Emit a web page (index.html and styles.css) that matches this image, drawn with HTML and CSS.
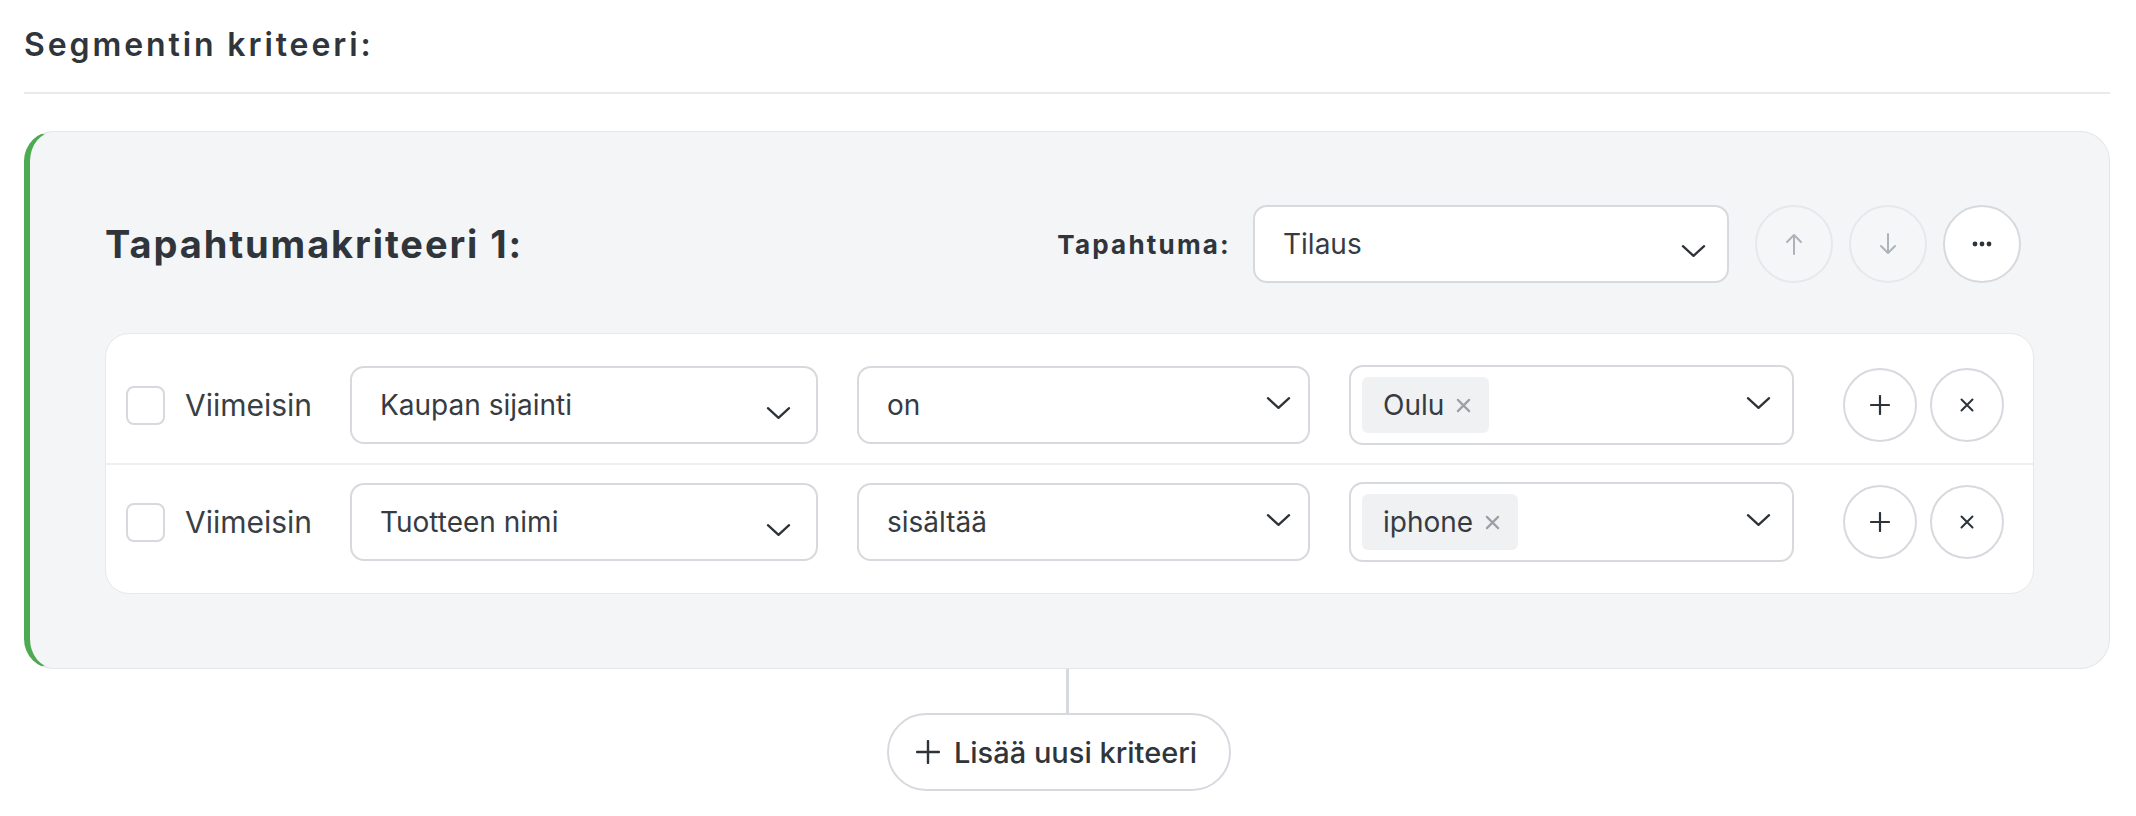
FILE: index.html
```html
<!DOCTYPE html>
<html lang="fi">
<head>
<meta charset="utf-8">
<title>Segmentin kriteeri</title>
<link rel="stylesheet" href="styles.css">
</head>
<body>
<div class="page">
  <h2 class="page-title">Segmentin kriteeri:</h2>

  <section class="card">
    <div class="card-head">
      <h3 class="card-title">Tapahtumakriteeri 1:</h3>
      <div class="head-controls">
        <span class="event-label">Tapahtuma:</span>
        <div class="select select-event">
          <span class="select-text">Tilaus</span>
          <svg class="chev" viewBox="0 0 26 14"><path d="M2 2 L13 12 L24 2"/></svg>
        </div>
        <button class="round round-disabled" aria-label="Ylös">
          <svg class="arrow" viewBox="0 0 18 24"><path d="M9 22 V3 M2 10 L9 3 L16 10"/></svg>
        </button>
        <button class="round round-disabled" aria-label="Alas">
          <svg class="arrow" viewBox="0 0 18 24"><path d="M9 2 V21 M2 14 L9 21 L16 14"/></svg>
        </button>
        <button class="round round-more" aria-label="Lisää">
          <svg class="dots" viewBox="0 0 20 6"><circle cx="3" cy="3" r="2.4"/><circle cx="10" cy="3" r="2.4"/><circle cx="17" cy="3" r="2.4"/></svg>
        </button>
      </div>
    </div>

    <div class="rules">
      <div class="rule">
        <label class="latest"><span class="check"></span><span class="latest-text">Viimeisin</span></label>
        <div class="select select-field">
          <span class="select-text">Kaupan sijainti</span>
          <svg class="chev chev-low" viewBox="0 0 26 14"><path d="M2 2 L13 12 L24 2"/></svg>
        </div>
        <div class="select select-op">
          <span class="select-text">on</span>
          <svg class="chev chev-high" viewBox="0 0 26 14"><path d="M2 2 L13 12 L24 2"/></svg>
        </div>
        <div class="select select-value">
          <span class="chip">Oulu<svg class="chip-x" viewBox="0 0 12 12"><path d="M1.5 1.5 L10.5 10.5 M10.5 1.5 L1.5 10.5"/></svg></span>
          <svg class="chev chev-high" viewBox="0 0 26 14"><path d="M2 2 L13 12 L24 2"/></svg>
        </div>
        <div class="rule-actions">
          <button class="circle" aria-label="Lisää ehto">
            <svg class="plus" viewBox="0 0 20 20"><path d="M10 1 V19 M1 10 H19"/></svg>
          </button>
          <button class="circle" aria-label="Poista ehto">
            <svg class="xicon" viewBox="0 0 14 14"><path d="M1.5 1.5 L12.5 12.5 M12.5 1.5 L1.5 12.5"/></svg>
          </button>
        </div>
      </div>
      <div class="rule">
        <label class="latest"><span class="check"></span><span class="latest-text">Viimeisin</span></label>
        <div class="select select-field">
          <span class="select-text">Tuotteen nimi</span>
          <svg class="chev chev-low" viewBox="0 0 26 14"><path d="M2 2 L13 12 L24 2"/></svg>
        </div>
        <div class="select select-op">
          <span class="select-text">sisältää</span>
          <svg class="chev chev-high" viewBox="0 0 26 14"><path d="M2 2 L13 12 L24 2"/></svg>
        </div>
        <div class="select select-value">
          <span class="chip">iphone<svg class="chip-x" viewBox="0 0 12 12"><path d="M1.5 1.5 L10.5 10.5 M10.5 1.5 L1.5 10.5"/></svg></span>
          <svg class="chev chev-high" viewBox="0 0 26 14"><path d="M2 2 L13 12 L24 2"/></svg>
        </div>
        <div class="rule-actions">
          <button class="circle" aria-label="Lisää ehto">
            <svg class="plus" viewBox="0 0 20 20"><path d="M10 1 V19 M1 10 H19"/></svg>
          </button>
          <button class="circle" aria-label="Poista ehto">
            <svg class="xicon" viewBox="0 0 14 14"><path d="M1.5 1.5 L12.5 12.5 M12.5 1.5 L1.5 12.5"/></svg>
          </button>
        </div>
      </div>
    </div>
  </section>

  <div class="add-wrap">
    <span class="connector"></span>
    <button class="add-btn">
      <svg class="add-plus" viewBox="0 0 24 24"><path d="M12 1 V23 M1 12 H23"/></svg>
      <span>Lisää uusi kriteeri</span>
    </button>
  </div>
</div>
</body>
</html>
```

FILE: styles.css
```css
* { box-sizing: border-box; }

html, body {
  margin: 0;
  padding: 0;
  background: #ffffff;
}

body {
  font-family: Inter, "Noto Sans", "Liberation Sans", sans-serif;
  color: #363b42;
}

.page {
  padding: 0 26px 0 24px;
}

.page-title {
  margin: 0;
  padding: 25px 0 27px;
  font-size: 32px;
  line-height: 40px;
  font-weight: 600;
  color: #30353c;
  border-bottom: 2px solid #e8eaed;
  letter-spacing: 2.9px;
}

.card {
  margin-top: 37px;
  background: #f4f5f7;
  border: 1px solid #e4e6ea;
  border-left: 6px solid #4caa50;
  border-radius: 30px;
  padding: 73px 75px 74px 75px;
}

.card-head {
  display: flex;
  align-items: center;
  justify-content: space-between;
  margin-right: 13px;
}

.card-title {
  margin: 0;
  font-size: 38px;
  font-weight: 700;
  color: #30353c;
  line-height: 44px;
  letter-spacing: 1.9px;
}

.head-controls {
  display: flex;
  align-items: center;
  gap: 16px;
}

.event-label {
  font-size: 26px;
  font-weight: 700;
  color: #30353c;
  letter-spacing: 2.2px;
  margin-right: 6px;
}

.select {
  position: relative;
  display: flex;
  align-items: center;
  height: 78px;
  background: #ffffff;
  border: 2px solid #d6d9de;
  border-radius: 14px;
  padding-left: 28px;
}

.select-text {
  font-size: 28px;
  color: #363b42;
}

.chev {
  position: absolute;
  width: 25px;
  height: 14px;
  fill: none;
  stroke: #2e3339;
  stroke-width: 2.4;
  stroke-linecap: round;
  stroke-linejoin: round;
}

.select-event {
  width: 476px;
  margin-right: 10px;
}
.select-event .chev { right: 21px; top: 37px; }

.round {
  width: 78px;
  height: 78px;
  border-radius: 50%;
  display: flex;
  align-items: center;
  justify-content: center;
  padding: 0;
  cursor: pointer;
}

.round-disabled {
  background: #f5f6f8;
  border: 2px solid #e6e8eb;
}

.arrow {
  width: 18px;
  height: 24px;
  fill: none;
  stroke: #aeb3b9;
  stroke-width: 2;
  stroke-linecap: round;
  stroke-linejoin: round;
}

.round-more {
  background: #ffffff;
  border: 2px solid #d6d9de;
}

.dots {
  width: 20px;
  height: 6px;
  fill: #2e3339;
}

.rules {
  margin-top: 50px;
  background: #ffffff;
  border: 1px solid #e6e8eb;
  border-radius: 24px;
  padding: 13px 0 14px;
}

.rule {
  display: flex;
  align-items: center;
  gap: 39px;
  height: 116px;
  padding: 0 28px 0 20px;
}

.rule + .rule {
  border-top: 2px solid #eceef1;
}

.latest {
  display: flex;
  align-items: center;
  gap: 20px;
  width: 185px;
}

.check {
  width: 39px;
  height: 39px;
  border: 2px solid #d6d9de;
  border-radius: 8px;
  background: #fff;
  flex: none;
}

.latest-text {
  font-size: 30px;
  color: #3a3f46;
}

.select-field { width: 468px; }
.select-op { width: 453px; }
.select-value { width: 445px; height: 80px; padding-left: 11px; }

.select-field .chev { right: 25px; top: 38px; }
.select-op .chev { right: 17px; top: 28px; }
.select-value .chev { right: 21px; top: 29px; }

.chip {
  display: inline-flex;
  align-items: center;
  height: 56px;
  padding: 0 18px 0 21px;
  gap: 12px;
  background: #f0f1f3;
  border-radius: 6px;
  font-size: 28px;
  color: #363b42;
}

.chip-x {
  width: 15px;
  height: 15px;
  fill: none;
  stroke: #9ba0a7;
  stroke-width: 1.8;
  stroke-linecap: round;
}

.rule-actions {
  display: flex;
  gap: 13px;
  margin-left: 10px;
}

.circle {
  width: 74px;
  height: 74px;
  border-radius: 50%;
  background: #ffffff;
  border: 2px solid #d6d9de;
  display: flex;
  align-items: center;
  justify-content: center;
  padding: 0;
  cursor: pointer;
}

.plus {
  width: 20px;
  height: 20px;
  fill: none;
  stroke: #2e3339;
  stroke-width: 2.2;
  stroke-linecap: round;
}

.xicon {
  width: 14px;
  height: 14px;
  fill: none;
  stroke: #2e3339;
  stroke-width: 2;
  stroke-linecap: round;
}

.add-wrap {
  display: flex;
  flex-direction: column;
  align-items: center;
}

.connector {
  display: block;
  width: 3px;
  height: 44px;
  background: #d6d9de;
}

.add-btn {
  display: flex;
  align-items: center;
  gap: 14px;
  height: 78px;
  padding: 0 32px 0 27px;
  margin-right: 16px;
  background: #ffffff;
  border: 2px solid #d6d9de;
  border-radius: 40px;
  font-family: Inter, "Noto Sans", sans-serif;
  font-size: 29px;
  font-weight: 500;
  color: #30353c;
  cursor: pointer;
}

.add-plus {
  width: 24px;
  height: 24px;
  fill: none;
  stroke: #2e3339;
  stroke-width: 2.4;
  stroke-linecap: round;
}
```
